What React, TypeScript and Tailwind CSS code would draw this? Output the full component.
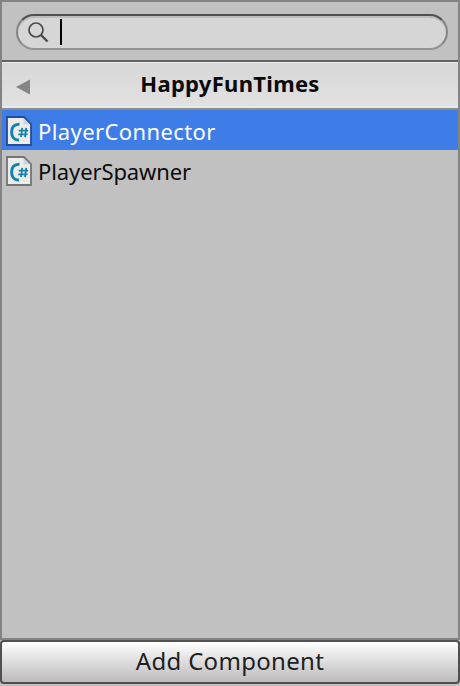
import React from "react";

function ScriptIcon({ selected }: { selected: boolean }) {
  return (
    <svg width="26" height="30" viewBox="0 0 26 30" className="shrink-0">
      <path
        d="M1 1H18L25 8V29H1Z"
        fill="#ececec"
        stroke={selected ? "#244c98" : "#747474"}
        strokeWidth="1.8"
      />
      <path d="M17.5 2V8.5H24Z" fill="#cbd5de" />
      <path d="M13.5 8.2C8 8 5.6 11.5 5.6 16C5.6 20.5 8 24.4 13 24" fill="none" stroke="#1683ad" strokeWidth="3" />
      <path d="M16.2 11.8L15 21.2M20.2 11.8L19 21.2M12.8 14.6H22.2M12.2 18.4H21.6" fill="none" stroke="#1683ad" strokeWidth="1.8" />
    </svg>
  );
}

function Row({ label, selected = false }: { label: string; selected?: boolean }) {
  return (
    <div
      className={
        "flex h-10 items-center pl-1 " +
        (selected ? "bg-[#3e7de7] tracking-[0.4px] text-white" : "tracking-[-0.1px] text-[#0c0c0c]")
      }
    >
      <div className="pt-0.5">
        <ScriptIcon selected={selected} />
      </div>
      <span className="ml-1.5 pt-0.5 text-[22px] leading-9 whitespace-nowrap">{label}</span>
    </div>
  );
}

export default function App() {
  return (
    <div className="flex h-[686px] w-[460px] flex-col bg-[#c1c1c1] font-['Noto_Sans','Open_Sans',sans-serif]">
      <div className="flex h-[640px] flex-col border-2 border-[#838383]">
        <div className="h-[58px] pt-3 pr-2.5 pl-3.5">
          <div className="flex h-9 items-center rounded-full border-2 border-t-[#505050] border-r-[#858585] border-b-[#929292] border-l-[#858585] bg-[#d6d6d6] pl-[9px] shadow-[inset_0_2px_1px_#bcbcbc]">
            <svg width="24" height="24" viewBox="0 0 24 24" fill="none" stroke="#4b4b4b">
              <circle cx="9" cy="10" r="7" strokeWidth="1.7" />
              <path d="M14 15L20.5 21.5" strokeWidth="2.4" />
            </svg>
            <div className="ml-[9px] h-[26px] w-0.5 bg-black" />
          </div>
        </div>
        <div className="flex h-[50px] items-center border-t-2 border-b-2 border-t-[#626262] border-b-[#8d8d8d] bg-linear-to-b from-[#d7d7d7] to-[#e2e2e2] shadow-[inset_0_1px_#ededed,inset_0_-2px_#e9e9e9]">
          <svg width="34" height="16" viewBox="0 0 34 16" className="mt-1 shrink-0">
            <path d="M14 8L28 0.5V15.5Z" fill="#858585" />
          </svg>
          <div className="flex-1 pr-[34px] pb-1 text-center text-[22px] leading-9 font-bold tracking-[0.3px] text-[#0a0a0a]">
            HappyFunTimes
          </div>
        </div>
        <Row label="PlayerConnector" selected />
        <Row label="PlayerSpawner" />
      </div>
      <div className="flex h-11 items-center justify-center rounded-[4px] border-2 border-[#505050] bg-linear-to-b from-white to-[#bdbbbc] pb-0.5 text-2xl tracking-[0.3px] text-[#202020]">
        Add Component
      </div>
    </div>
  );
}
